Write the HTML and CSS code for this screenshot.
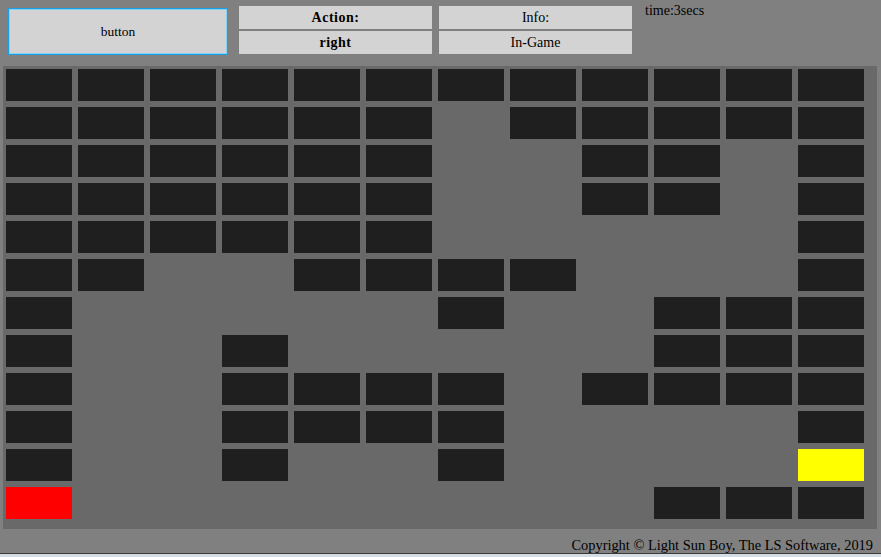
FILE: index.html
```html
<!DOCTYPE html>
<html>
<head>
<meta charset="utf-8">
<title>Maze</title>
<link rel="stylesheet" href="styles.css">
</head>
<body>
<div class="page">
  <header class="topbar">
    <button class="btn">button</button>
    <div class="panel panel-action">
      <div class="box bold">Action:</div>
      <div class="box bold">right</div>
    </div>
    <div class="panel panel-info">
      <div class="box">Info:</div>
      <div class="box">In-Game</div>
    </div>
    <div class="timer">time:3secs</div>
  </header>
  <main class="board">
    <div class="cell w"></div><div class="cell w"></div><div class="cell w"></div><div class="cell w"></div><div class="cell w"></div><div class="cell w"></div><div class="cell w"></div><div class="cell w"></div><div class="cell w"></div><div class="cell w"></div><div class="cell w"></div><div class="cell w"></div>
    <div class="cell w"></div><div class="cell w"></div><div class="cell w"></div><div class="cell w"></div><div class="cell w"></div><div class="cell w"></div><div class="cell"></div><div class="cell w"></div><div class="cell w"></div><div class="cell w"></div><div class="cell w"></div><div class="cell w"></div>
    <div class="cell w"></div><div class="cell w"></div><div class="cell w"></div><div class="cell w"></div><div class="cell w"></div><div class="cell w"></div><div class="cell"></div><div class="cell"></div><div class="cell w"></div><div class="cell w"></div><div class="cell"></div><div class="cell w"></div>
    <div class="cell w"></div><div class="cell w"></div><div class="cell w"></div><div class="cell w"></div><div class="cell w"></div><div class="cell w"></div><div class="cell"></div><div class="cell"></div><div class="cell w"></div><div class="cell w"></div><div class="cell"></div><div class="cell w"></div>
    <div class="cell w"></div><div class="cell w"></div><div class="cell w"></div><div class="cell w"></div><div class="cell w"></div><div class="cell w"></div><div class="cell"></div><div class="cell"></div><div class="cell"></div><div class="cell"></div><div class="cell"></div><div class="cell w"></div>
    <div class="cell w"></div><div class="cell w"></div><div class="cell"></div><div class="cell"></div><div class="cell w"></div><div class="cell w"></div><div class="cell w"></div><div class="cell w"></div><div class="cell"></div><div class="cell"></div><div class="cell"></div><div class="cell w"></div>
    <div class="cell w"></div><div class="cell"></div><div class="cell"></div><div class="cell"></div><div class="cell"></div><div class="cell"></div><div class="cell w"></div><div class="cell"></div><div class="cell"></div><div class="cell w"></div><div class="cell w"></div><div class="cell w"></div>
    <div class="cell w"></div><div class="cell"></div><div class="cell"></div><div class="cell w"></div><div class="cell"></div><div class="cell"></div><div class="cell"></div><div class="cell"></div><div class="cell"></div><div class="cell w"></div><div class="cell w"></div><div class="cell w"></div>
    <div class="cell w"></div><div class="cell"></div><div class="cell"></div><div class="cell w"></div><div class="cell w"></div><div class="cell w"></div><div class="cell w"></div><div class="cell"></div><div class="cell w"></div><div class="cell w"></div><div class="cell w"></div><div class="cell w"></div>
    <div class="cell w"></div><div class="cell"></div><div class="cell"></div><div class="cell w"></div><div class="cell w"></div><div class="cell w"></div><div class="cell w"></div><div class="cell"></div><div class="cell"></div><div class="cell"></div><div class="cell"></div><div class="cell w"></div>
    <div class="cell w"></div><div class="cell"></div><div class="cell"></div><div class="cell w"></div><div class="cell"></div><div class="cell"></div><div class="cell w"></div><div class="cell"></div><div class="cell"></div><div class="cell"></div><div class="cell"></div><div class="cell goal"></div>
    <div class="cell player"></div><div class="cell"></div><div class="cell"></div><div class="cell"></div><div class="cell"></div><div class="cell"></div><div class="cell"></div><div class="cell"></div><div class="cell"></div><div class="cell w"></div><div class="cell w"></div><div class="cell w"></div>
  </main>
  <footer class="footer">Copyright © Light Sun Boy, The LS Software, 2019</footer>
</div>
</body>
</html>
```
FILE: styles.css
```css
* { box-sizing: border-box; }
html, body {
  margin: 0;
  padding: 0;
  background: #808080;
}
body {
  font-family: "Liberation Serif", "Times New Roman", serif;
  font-size: 14px;
  color: #000;
}
.page {
  width: 881px;
  height: 557px;
  display: flex;
  flex-direction: column;
  border-bottom: 3px solid #d4dce4;
  overflow: hidden;
}
.topbar {
  height: 66px;
  display: flex;
  align-items: flex-start;
  padding-left: 8px;
  flex: none;
}
.btn {
  margin-top: 8px;
  width: 220px;
  height: 47px;
  background: #d3d3d3;
  border: 1px solid #1a9fe6;
  box-shadow: inset 0 0 0 1px #86d2f4;
  font: 13.5px "Liberation Serif", "Times New Roman", serif;
  color: #000;
  padding: 0;
}
.panel {
  margin-top: 6px;
  width: 193px;
  display: flex;
  flex-direction: column;
  gap: 2px;
}
.panel-action { margin-left: 11px; }
.panel-info { margin-left: 7px; }
.box {
  height: 23px;
  line-height: 23px;
  background: #d3d3d3;
  text-align: center;
}
.bold { font-weight: bold; letter-spacing: 0.5px; }
.timer {
  margin-left: 13px;
  margin-top: 3px;
  line-height: 16px;
}
.board {
  flex: none;
  margin-left: 3px;
  width: 874px;
  height: 463px;
  background: #696969;
  padding: 3px;
  display: grid;
  grid-template-columns: repeat(12, 66px);
  grid-auto-rows: 32px;
  gap: 6px;
}
.cell { width: 66px; height: 32px; }
.cell.w { background: #1f1f1f; }
.cell.player { background: #ff0000; }
.cell.goal { background: #ffff00; }
.footer {
  flex: none;
  height: 25px;
  padding: 8px 8px 0 0;
  text-align: right;
  font-size: 14.4px;
  line-height: 16px;
  border-bottom: 1px solid #3a3a3a;
}
```
